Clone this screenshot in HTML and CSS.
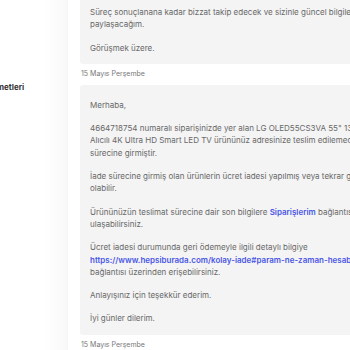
FILE: index.html
```html
<!DOCTYPE html>
<html lang="tr">
<head>
<meta charset="utf-8">
<link rel="stylesheet" href="styles.css">
</head>
<body>
<div class="page">
  <aside class="sidebar">
    <div class="side-item">Hizmetleri</div>
  </aside>
  <main class="thread">
    <div class="bubble bubble-top">
      <p>Süreç sonuçlanana kadar bizzat takip edecek ve sizinle güncel bilgileri<br>paylaşacağım.</p>
      <p>Görüşmek üzere.</p>
    </div>
    <div class="date">15 Mayıs Perşembe</div>
    <div class="bubble">
      <p>Merhaba,</p>
      <p>4664718754 numaralı siparişinizde yer alan LG OLED55CS3VA 55" 139 Ekran Uydu<br>Alıcılı 4K Ultra HD Smart LED TV ürününüz adresinize teslim edilemediği için iade<br>sürecine girmiştir.</p>
      <p>İade sürecine girmiş olan ürünlerin ücret iadesi yapılmış veya tekrar gönderimi sağlanmış<br>olabilir.</p>
      <p>Ürününüzün teslimat sürecine dair son bilgilere <a class="link" href="#">Siparişlerim</a> bağlantısından<br>ulaşabilirsiniz.</p>
      <p>Ücret iadesi durumunda geri ödemeyle ilgili detaylı bilgiye<br><a class="link" href="#">https://www.hepsiburada.com/kolay-iade#param-ne-zaman-hesabima-gecer</a><br>bağlantısı üzerinden erişebilirsiniz.</p>
      <p>Anlayışınız için teşekkür ederim.</p>
      <p>İyi günler dilerim.</p>
    </div>
    <div class="date">15 Mayıs Perşembe</div>
  </main>
</div>
</body>
</html>
```
FILE: styles.css
```css
html, body {
  margin: 0;
  padding: 0;
  background: #ffffff;
  overflow: hidden;
  width: 350px;
  height: 350px;
}
body {
  font-family: Inter, "Noto Sans", sans-serif;
  color: #686868;
}
.page {
  display: flex;
  margin-left: -16px;
  margin-top: -8px;
  width: 600px;
}
.sidebar {
  width: 84px;
  flex: none;
  padding-top: 90px;
  background: linear-gradient(to right, #ffffff 0, #ffffff 60px, #f9f9f9 81px, #f5f5f5 84px);
}
.side-item {
  font-size: 8px;
  font-weight: 700;
  color: #333333;
  white-space: nowrap;
}
.thread {
  flex: 1;
  padding-left: 12px;
  display: flex;
  flex-direction: column;
  align-items: flex-start;
}
.bubble {
  background: #f4f4f4;
  border-radius: 3px;
  padding: 14px 10px 10px;
  width: 500px;
  font-size: 8px;
  line-height: 12.3px;
  white-space: nowrap;
}
.bubble p {
  margin: 0 0 11px;
}
.bubble p:last-child {
  margin-bottom: 0;
}
.date {
  font-size: 7px;
  color: #777777;
  padding: 5px 0 7px 1px;
}
.link {
  color: #4a57e6;
  font-weight: 600;
  text-decoration: none;
}
```
